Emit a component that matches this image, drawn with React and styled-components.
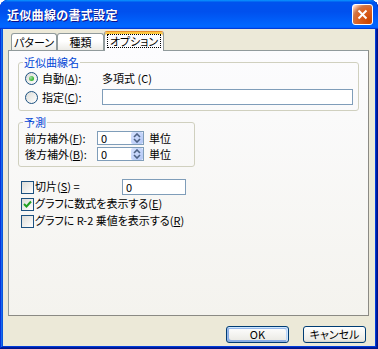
import React from "react";
import styled, { createGlobalStyle } from "styled-components";

const GlobalStyle = createGlobalStyle`
  body {
    margin: 0;
    background: #ffffff;
  }
  * {
    box-sizing: border-box;
  }
`;

const Window = styled.div`
  width: 378px;
  height: 349px;
  display: flex;
  flex-direction: column;
  background: #0831d9;
  border-radius: 8px 8px 0 0;
  box-shadow: inset -1px -1px #00138c, inset 1px 1px #0831d9,
    inset -2px -2px #001ea0, inset 2px 2px #166aee, inset -3px -3px #003bda,
    inset 3px 3px #0855dd;
  overflow: hidden;
  font-family: "Noto Sans CJK JP", "Noto Sans", sans-serif;
  font-size: 11px;
  line-height: 13px;
  color: #000;
`;

const TitleBar = styled.div`
  height: 29px;
  flex: none;
  display: flex;
  align-items: center;
  justify-content: space-between;
  padding: 0 5px 0 7px;
  border-radius: 7px 7px 0 0;
  background: linear-gradient(
    180deg,
    #0997ff,
    #0053ee 8%,
    #0050ee 40%,
    #0066ff 88%,
    #0066ff 93%,
    #005bff 95%,
    #003dd7 96%,
    #003dd7
  );
`;

const Title = styled.div`
  color: #fff;
  font-size: 12px;
  font-weight: bold;
  letter-spacing: 0.3px;
  text-shadow: 1px 1px #0f1089;
  padding-bottom: 1px;
`;

const CloseButton = styled.div`
  width: 21px;
  height: 21px;
  border: 1px solid #fff;
  border-radius: 3px;
  display: flex;
  align-items: center;
  justify-content: center;
  background: radial-gradient(
    circle at 85% 85%,
    #cc4600 0%,
    #dc6527 55%,
    #cd7546 70%,
    #ffccb2 90%,
    #fff 100%
  );
`;

const Body = styled.div`
  flex: 1;
  min-height: 0;
  margin: 0 3px 3px;
  padding: 0 6px 0 5px;
  background: #ece9d8;
  display: flex;
  flex-direction: column;
  font-feature-settings: "palt";
`;

const TabRow = styled.div`
  height: 21px;
  flex: none;
  display: flex;
  align-items: flex-end;
  padding-left: 3px;
  position: relative;
  z-index: 1;
`;

const Tab = styled.div`
  width: ${(p) => p.$w}px;
  height: ${(p) => (p.$active ? 20 : 17)}px;
  margin-bottom: ${(p) => (p.$active ? -1 : 0)}px;
  border: 1px solid #919b9c;
  border-bottom: none;
  border-top-color: ${(p) => (p.$active ? "#e68b2c" : "#919b9c")};
  border-radius: 3px 3px 0 0;
  display: flex;
  align-items: ${(p) => (p.$active ? "flex-start" : "center")};
  padding-top: ${(p) => (p.$active ? 2 : 0)}px;
  justify-content: center;
  background: ${(p) =>
    p.$active ? "#fcfcfe" : "linear-gradient(180deg, #fff, #fff 45%, #ecebe6)"};
  box-shadow: ${(p) => (p.$active ? "inset 0 2px #ffc83c" : "none")};
`;

const Focus = styled.span`
  outline: 1px dotted #000;
  padding: 0 2px;
  line-height: 12px;
  margin-top: 1px;
`;

const Panel = styled.div`
  flex: 1;
  border: 1px solid #919b9c;
  border-right-color: #8b8a84;
  border-bottom-color: #8b8a84;
  background: linear-gradient(180deg, #fcfcfe, #f4f3ee);
  padding: 0 9px;
  display: flex;
  flex-direction: column;
  align-items: flex-start;
`;

const Group = styled.fieldset`
  margin: 5px 0 0;
  padding: 0 5px 5px 6px;
  border: 1px solid #d0d0bf;
  border-radius: 3px;
  width: ${(p) => p.$w};
  min-width: 0;
`;

const Legend = styled.legend`
  padding: 0 1px;
  margin-left: -2px;
  color: #0046d5;
  line-height: 12px;
`;

const Rows = styled.div`
  display: flex;
  flex-direction: column;
  gap: ${(p) => p.$gap}px;
  margin-top: ${(p) => p.$top || 0}px;
`;

const Row = styled.div`
  display: flex;
  align-items: center;
  height: ${(p) => p.$h}px;
`;

const Radio = styled.span`
  width: 13px;
  height: 13px;
  flex: none;
  border-radius: 50%;
  border: 1px solid #1c5180;
  background: linear-gradient(135deg, #dcdcd7, #fff);
  display: flex;
  align-items: center;
  justify-content: center;
  margin-right: 4px;

  &::after {
    content: "";
    width: 5px;
    height: 5px;
    border-radius: 50%;
    background: ${(p) =>
      p.$on
        ? "radial-gradient(circle at 35% 35%, #a9dca6, #4dbf4a 50%, #0da40a)"
        : "transparent"};
  }
`;

const Label = styled.span`
  width: ${(p) => (p.$w ? `${p.$w}px` : "auto")};
  flex: none;
  white-space: nowrap;
`;

const TextBox = styled.div`
  width: ${(p) => (p.$w ? `${p.$w}px` : "auto")};
  flex: ${(p) => (p.$w ? "none" : 1)};
  height: 16px;
  border: 1px solid #7f9db9;
  background: #fff;
  padding-left: 3px;
  line-height: 14px;
`;

const Spinner = styled.div`
  width: 47px;
  height: 14px;
  flex: none;
  border: 1px solid #7f9db9;
  background: #fff;
  display: flex;
  align-items: center;
  justify-content: space-between;
  padding-left: 3px;
  margin-right: 5px;
  line-height: 12px;
`;

const SpinButton = styled.div`
  width: 12px;
  height: 12px;
  border-radius: 2px;
  background: linear-gradient(135deg, #d6e2fd, #b2c6f5);
  display: flex;
  align-items: center;
  justify-content: center;
`;

const CheckList = styled.div`
  margin: 11px 0 0 3px;
  display: flex;
  flex-direction: column;
`;

const Check = styled.span`
  width: 13px;
  height: 13px;
  flex: none;
  border: 1px solid #1c5180;
  background: linear-gradient(135deg, #dcdcd7, #fff);
  margin-right: 1px;
  margin-top: 2px;
  display: flex;
  align-items: center;
  justify-content: center;
`;

const ButtonRow = styled.div`
  height: 17px;
  flex: none;
  margin: 10px 3px 3px 0;
  display: flex;
  justify-content: flex-end;
  gap: 14px;
`;

const Button = styled.div`
  width: 63px;
  height: 17px;
  border: 1px solid #003c74;
  border-radius: 3px;
  background: linear-gradient(180deg, #fff, #ecebe6 86%, #d6d0c5);
  display: flex;
  align-items: center;
  justify-content: center;
  line-height: 13px;
  box-shadow: ${(p) =>
    p.$default
      ? "inset -1px 1px #cee7ff, inset 1px 2px #98b8ea, inset -2px 2px #bcd4f6, inset 1px -1px #89ade4, inset 2px -2px #89ade4"
      : "none"};
`;

const Key = ({ k }) => (
  <>
    (<u>{k}</u>)
  </>
);

const SpinIcon = () => (
  <SpinButton>
    <svg width="8" height="10" viewBox="0 0 8 10">
      <path d="M1 4 L4 1 L7 4 M1 6 L4 9 L7 6" fill="none" stroke="#4d6185" strokeWidth="1.6" />
    </svg>
  </SpinButton>
);

const CheckMark = ({ on }) => (
  <Check>
    {on && (
      <svg width="9" height="9" viewBox="0 0 9 9">
        <path d="M1 4 L3.5 6.5 L8 1.5" fill="none" stroke="#21a121" strokeWidth="2" />
      </svg>
    )}
  </Check>
);

export default function App() {
  return (
    <>
      <GlobalStyle />
      <Window>
        <TitleBar>
          <Title>近似曲線の書式設定</Title>
          <CloseButton>
            <svg width="11" height="11" viewBox="0 0 11 11">
              <path d="M1.5 1.5 L9.5 9.5 M9.5 1.5 L1.5 9.5" stroke="#fff" strokeWidth="2" />
            </svg>
          </CloseButton>
        </TitleBar>
        <Body>
          <TabRow>
            <Tab $w={46}>パターン</Tab>
            <Tab $w={47}>種類</Tab>
            <Tab $w={60} $active>
              <Focus>オプション</Focus>
            </Tab>
          </TabRow>
          <Panel>
            <Group $w="100%">
              <Legend>近似曲線名</Legend>
              <Rows $gap={3} $top={2}>
                <Row $h={16}>
                  <Radio $on />
                  <Label $w={60}>
                    自動<Key k="A" />:
                  </Label>
                  <Label>多項式 (C)</Label>
                </Row>
                <Row $h={16}>
                  <Radio />
                  <Label $w={60}>
                    指定<Key k="C" />:
                  </Label>
                  <TextBox />
                </Row>
              </Rows>
            </Group>
            <Group $w="177px">
              <Legend>予測</Legend>
              <Rows $gap={2} $top={3}>
                <Row $h={14}>
                  <Label $w={72}>
                    前方補外<Key k="F" />:
                  </Label>
                  <Spinner>
                    0
                    <SpinIcon />
                  </Spinner>
                  <Label>単位</Label>
                </Row>
                <Row $h={14}>
                  <Label $w={72}>
                    後方補外<Key k="B" />:
                  </Label>
                  <Spinner>
                    0
                    <SpinIcon />
                  </Spinner>
                  <Label>単位</Label>
                </Row>
              </Rows>
            </Group>
            <CheckList>
              <Row $h={17}>
                <CheckMark />
                <Label $w={87}>
                  切片<Key k="S" /> =
                </Label>
                <TextBox $w={64}>0</TextBox>
              </Row>
              <Row $h={17}>
                <CheckMark on />
                <Label>
                  グラフに数式を表示する<Key k="E" />
                </Label>
              </Row>
              <Row $h={17}>
                <CheckMark />
                <Label>
                  グラフに R-2 乗値を表示する<Key k="R" />
                </Label>
              </Row>
            </CheckList>
          </Panel>
          <ButtonRow>
            <Button $default>OK</Button>
            <Button>キャンセル</Button>
          </ButtonRow>
        </Body>
      </Window>
    </>
  );
}
